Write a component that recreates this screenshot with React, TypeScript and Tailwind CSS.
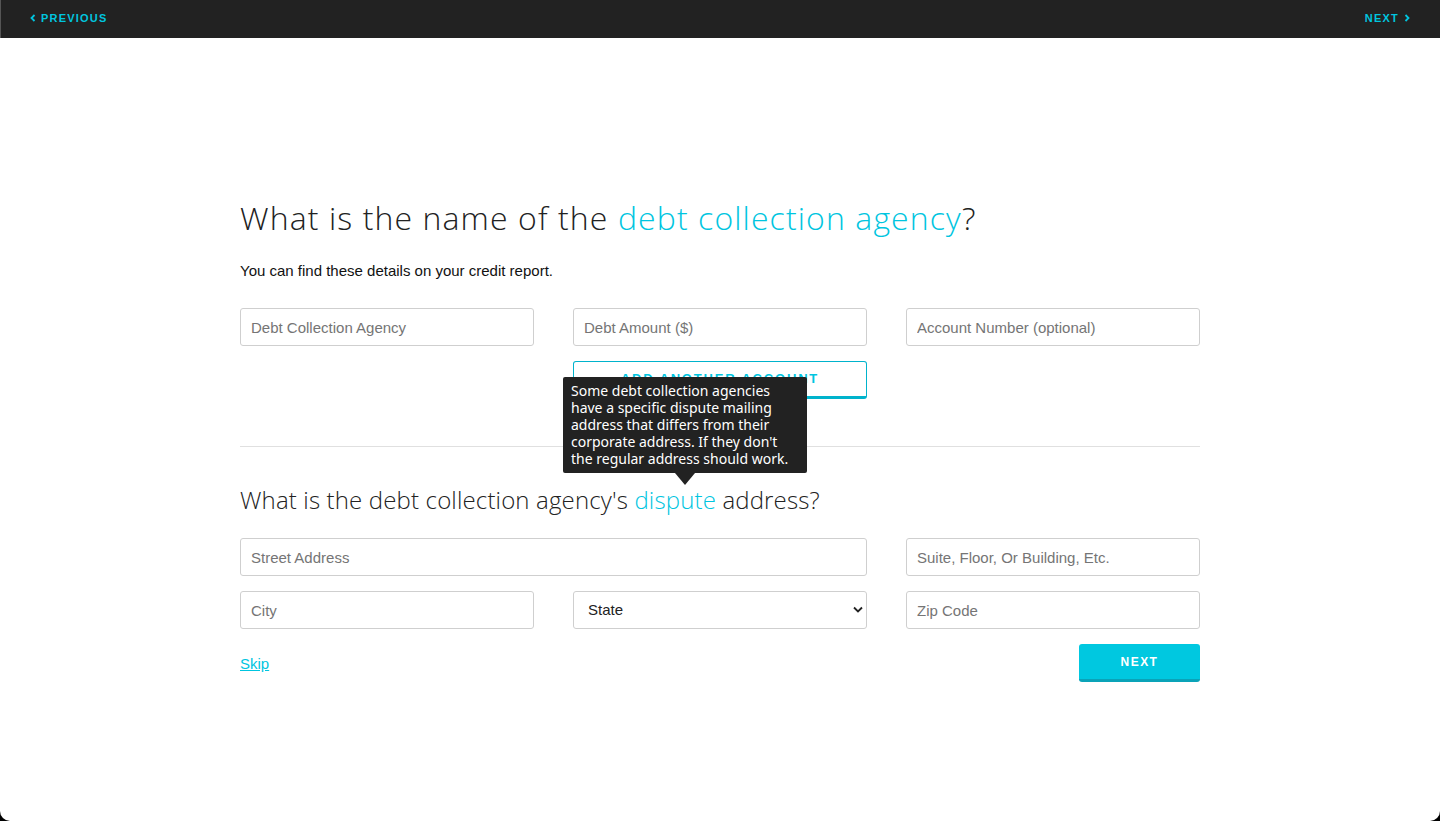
import { useState } from "react";

const teal = "text-[#00c5df]";

function Field({ placeholder, className = "" }: { placeholder: string; className?: string }) {
  return (
    <input
      type="text"
      placeholder={placeholder}
      className={`h-[38px] w-full rounded-[3px] border border-[#cfcfcf] bg-white px-[10px] text-[15px] text-[#222] placeholder:text-[#757575] outline-none ${className}`}
    />
  );
}

export default function App() {
  const [state, setState] = useState("");

  return (
    <div className="min-h-screen bg-black" style={{ fontFamily: '"Liberation Sans", Arial, sans-serif' }}>
      <div className="flex h-[821px] flex-col overflow-hidden rounded-b-[10px] bg-white">
        <header className="flex h-[38px] shrink-0 items-center justify-between border-l border-[#555] bg-[#222] pb-[2px] pl-[29px] pr-[30px]">
          <a href="#" className={`flex items-center gap-[5px] text-[11px] font-bold tracking-[0.11em] ${teal}`}>
            <svg width="6" height="8" viewBox="0 0 6 8" fill="none">
              <path d="M4.5 1L1.5 4L4.5 7" stroke="currentColor" strokeWidth="1.8" />
            </svg>
            PREVIOUS
          </a>
          <a href="#" className={`flex items-center gap-[5px] text-[11px] font-bold tracking-[0.11em] ${teal}`}>
            NEXT
            <svg width="6" height="8" viewBox="0 0 6 8" fill="none">
              <path d="M1.5 1L4.5 4L1.5 7" stroke="currentColor" strokeWidth="1.8" />
            </svg>
          </a>
        </header>

        <main className="mx-auto w-[960px] pt-[158px]">
          <h1 className="text-[32px] font-light leading-[44px] tracking-[1.1px] text-[#222]" style={{ fontFamily: '"Open Sans", sans-serif' }}>
            What is the name of the <span className={teal}>debt collection agency</span>?
          </h1>
          <p className="mt-[22px] text-[15px] leading-[18px] text-[#111]">You can find these details on your credit report.</p>

          <div className="mt-[28px] grid grid-cols-3 gap-x-[39px]">
            <Field placeholder="Debt Collection Agency" />
            <Field placeholder="Debt Amount ($)" />
            <Field placeholder="Account Number (optional)" />
            <div />
            <div className="relative mt-[15px]">
              <button className={`h-[38px] w-full rounded-[3px] border border-b-[3px] border-[#00b3cc] bg-white text-[13px] font-bold tracking-[0.14em] ${teal}`}>
                ADD ANOTHER ACCOUNT
              </button>
              <div
                className="absolute left-[-10px] top-[16px] z-10 w-[244px] rounded-[2px] bg-[#222] px-[8px] pb-[6px] pt-[5px] text-[14px] leading-[17px] text-white"
                style={{ fontFamily: '"Noto Sans", sans-serif' }}
              >
                Some debt collection agencies have a specific dispute mailing address that differs from their corporate address. If they don't the regular address should work.
                <span className="absolute bottom-[-12px] left-[112px] h-0 w-0 border-x-[10px] border-t-[12px] border-x-transparent border-t-[#222]" />
              </div>
            </div>
            <div />
          </div>

          <hr className="mt-[47px] border-t border-[#e0e0e0]" />

          <h2 className="mt-[37px] text-[24px] font-light leading-[32px] tracking-[0.15px] text-[#222]" style={{ fontFamily: '"Open Sans", sans-serif' }}>
            What is the debt collection agency's <span className={teal}>dispute</span> address?
          </h2>

          <div className="mt-[22px] grid grid-cols-3 gap-x-[39px] gap-y-[15px]">
            <Field placeholder="Street Address" className="col-span-2" />
            <Field placeholder="Suite, Floor, Or Building, Etc." />
            <Field placeholder="City" />
            <div className="relative">
              <select
                value={state}
                onChange={(e) => setState(e.target.value)}
                className="h-[38px] w-full appearance-none rounded-[3px] border border-[#cfcfcf] bg-white px-[14px] text-[15px] text-[#222] outline-none"
              >
                <option value="">State</option>
                <option value="CA">California</option>
                <option value="NY">New York</option>
                <option value="TX">Texas</option>
              </select>
              <svg className="pointer-events-none absolute right-[4px] top-[15px]" width="10" height="7" viewBox="0 0 10 7" fill="none">
                <path d="M1 1.5L5 5.5L9 1.5" stroke="#222" strokeWidth="1.8" />
              </svg>
            </div>
            <Field placeholder="Zip Code" />
          </div>

          <div className="mt-[15px] flex items-center justify-between">
            <a href="#" className={`pt-[3px] text-[15px] underline ${teal}`}>Skip</a>
            <button className="h-[38px] w-[121px] rounded-[3px] border-b-[3px] border-[#0aa3b8] bg-[#00c8e0] text-[12px] font-bold tracking-[0.12em] text-white">
              NEXT
            </button>
          </div>
        </main>
      </div>
    </div>
  );
}
